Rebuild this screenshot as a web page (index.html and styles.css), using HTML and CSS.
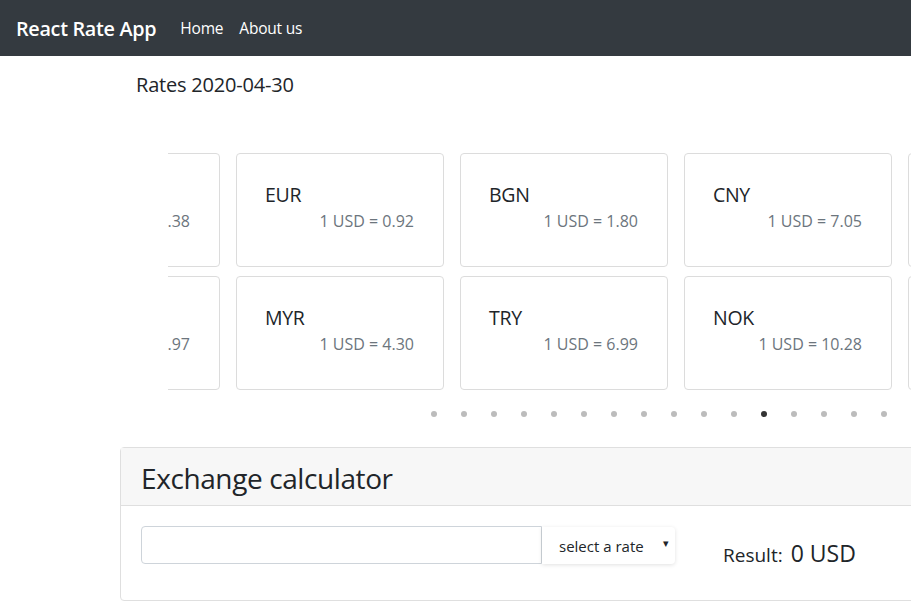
FILE: index.html
```html
<!DOCTYPE html>
<html>
<head>
<meta charset="utf-8">
<link rel="stylesheet" href="styles.css">
</head>
<body>
<nav class="navbar">
  <span class="brand">React Rate App</span>
  <a class="nav-link">Home</a>
  <a class="nav-link">About us</a>
</nav>
<main class="main">
  <h5 class="rates-title">Rates 2020-04-30</h5>
  <div class="carousel">
    <div class="track">
      <div class="slide">
        <div class="rate-card"><div class="cur">JPY</div><div class="val">1 USD = 107.38</div></div>
        <div class="rate-card"><div class="cur">SEK</div><div class="val">1 USD = 9.97</div></div>
      </div>
      <div class="slide">
        <div class="rate-card"><div class="cur">EUR</div><div class="val">1 USD = 0.92</div></div>
        <div class="rate-card"><div class="cur">MYR</div><div class="val">1 USD = 4.30</div></div>
      </div>
      <div class="slide">
        <div class="rate-card"><div class="cur">BGN</div><div class="val">1 USD = 1.80</div></div>
        <div class="rate-card"><div class="cur">TRY</div><div class="val">1 USD = 6.99</div></div>
      </div>
      <div class="slide">
        <div class="rate-card"><div class="cur">CNY</div><div class="val">1 USD = 7.05</div></div>
        <div class="rate-card"><div class="cur">NOK</div><div class="val">1 USD = 10.28</div></div>
      </div>
      <div class="slide">
        <div class="rate-card"><div class="cur">NZD</div><div class="val">1 USD = 1.63</div></div>
        <div class="rate-card"><div class="cur">ZAR</div><div class="val">1 USD = 18.40</div></div>
      </div>
    </div>
    <ul class="dots">
      <li></li><li></li><li></li><li></li><li></li><li></li><li></li><li></li>
      <li></li><li></li><li></li><li class="active"></li><li></li><li></li><li></li><li></li>
    </ul>
  </div>
  <section class="calc">
    <div class="calc-header"><h2>Exchange calculator</h2></div>
    <div class="calc-body">
      <div class="input-group">
        <input class="amount" type="text">
        <div class="select">select a rate<span class="arrow">&#9662;</span></div>
      </div>
      <div class="result"><span class="result-label">Result:</span><span class="result-value">0 USD</span></div>
    </div>
  </section>
</main>
</body>
</html>
```
FILE: styles.css
```css
html, body {
  margin: 0;
  padding: 0;
  overflow: hidden;
  width: 911px;
  height: 607px;
  background: #fff;
  font-family: "Open Sans", "Noto Sans", sans-serif;
  color: #212529;
}
.navbar {
  height: 56px;
  background: #343a40;
  display: flex;
  align-items: center;
  padding: 0 16px;
  box-sizing: border-box;
}
.brand {
  color: #fff;
  font-size: 19.8px;
  font-weight: 600;
  margin-right: 24px;
  letter-spacing: -0.3px;
}
.nav-link {
  color: #fff;
  font-size: 15.5px;
  margin-right: 16px;
  letter-spacing: -0.2px;
}
.main {
  padding-left: 120px;
  width: 1000px;
}
.rates-title {
  margin: 0;
  padding: 16px 0 0 16px;
  font-size: 20px;
  font-weight: 400;
  line-height: 26px;
  letter-spacing: -0.2px;
}
.carousel {
  margin: 55px 0 0 48px;
  width: 900px;
  overflow: hidden;
}
.track {
  display: flex;
  transform: translateX(-164px);
}
.slide {
  flex: 0 0 224px;
  box-sizing: border-box;
  padding: 0 8px;
  display: flex;
  flex-direction: column;
  gap: 9px;
}
.rate-card {
  height: 114px;
  box-sizing: border-box;
  border: 1px solid #dcdcdc;
  border-radius: 4px;
  padding: 28px 29px 0 28px;
  background: #fff;
}
.cur {
  font-size: 19.5px;
  line-height: 26px;
  letter-spacing: -0.3px;
}
.val {
  text-align: right;
  color: #6c757d;
  font-size: 16px;
  line-height: 24px;
  margin-top: 1px;
  letter-spacing: 0;
}
.dots {
  list-style: none;
  margin: 18px 0 0 251px;
  padding: 0;
  display: flex;
}
.dots li {
  width: 30px;
  height: 12px;
  display: flex;
  align-items: center;
  justify-content: center;
}
.dots li::before {
  content: "";
  width: 6px;
  height: 6px;
  border-radius: 50%;
  background: #bcbcbc;
}
.dots li.active::before {
  background: #333;
}
.calc {
  margin-top: 27px;
  width: 880px;
  border: 1px solid #dfdfdf;
  border-radius: 4px;
}
.calc-header {
  height: 57px;
  background: #f7f7f7;
  border-bottom: 1px solid #dfdfdf;
  display: flex;
  align-items: center;
  padding-left: 20px;
}
.calc-header h2 {
  margin: 0;
  font-size: 28px;
  font-weight: 400;
  line-height: 34px;
  margin-top: 3px;
  letter-spacing: -0.4px;
}
.calc-body {
  padding: 20px 20px 36px 20px;
  display: flex;
  align-items: center;
  height: 38px;
  box-sizing: content-box;
}
.input-group {
  display: flex;
  align-items: stretch;
  height: 38px;
}
.amount {
  width: 401px;
  height: 38px;
  box-sizing: border-box;
  border: 1px solid #ced4da;
  border-radius: 4px 0 0 4px;
  margin: 0;
  padding: 0 12px;
}
.select {
  width: 133px;
  height: 37px;
  box-sizing: border-box;
  border-radius: 0 4px 4px 0;
  box-shadow: 0 1px 4px rgba(0,0,0,0.12);
  display: flex;
  align-items: center;
  padding-left: 17px;
  font-size: 15px;
  letter-spacing: 0;
  position: relative;
  margin-top: 1px;
}
.arrow {
  position: absolute;
  right: 6px;
  top: 8px;
  font-size: 11px;
}
.result {
  margin-left: 48px;
  margin-top: 16px;
  display: flex;
  align-items: baseline;
}
.result-label {
  font-size: 19px;
  font-weight: 400;
  margin-right: 8px;
  letter-spacing: 0;
}
.result-value {
  font-size: 23px;
  font-weight: 400;
  letter-spacing: 0;
}
```
